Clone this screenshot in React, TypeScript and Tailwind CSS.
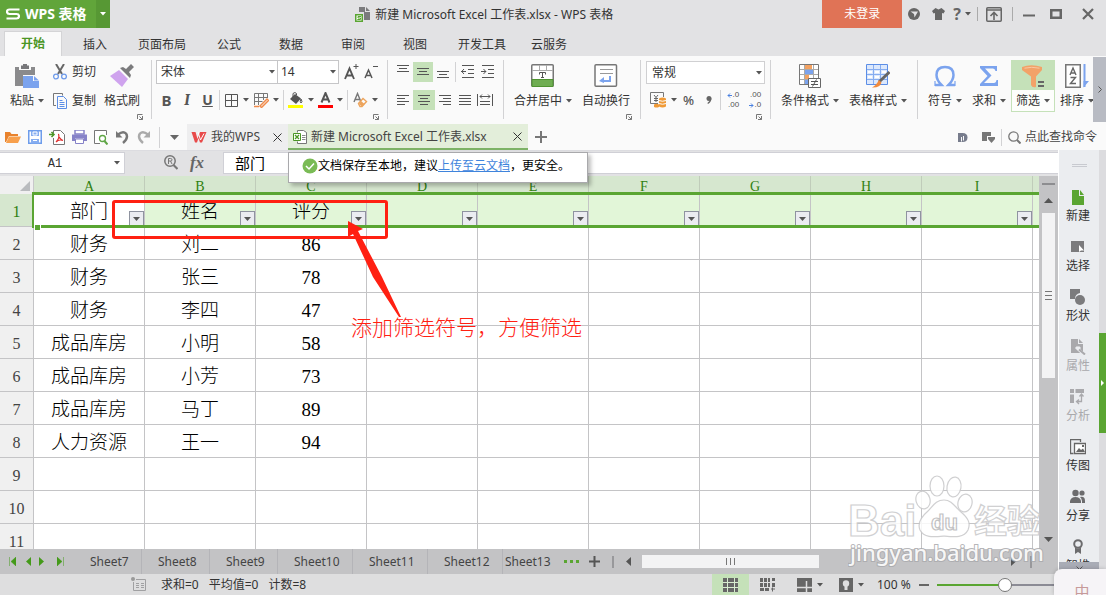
import React from "react";

type Kids = { children?: React.ReactNode };

function Icon({ w, h, children, className = "" }: { w: number; h: number; className?: string } & Kids) {
  return (
    <svg width={w} height={h} viewBox={`0 0 ${w} ${h}`} fill="none" className={`shrink-0 ${className}`} aria-hidden="true">
      {children}
    </svg>
  );
}

function Caret({ className = "text-[#555]" }: { className?: string }) {
  return (
    <Icon w={6} h={4} className={className}>
      <path d="M0 0h6L3 3.5z" fill="currentColor" />
    </Icon>
  );
}

function Sep({ className = "h-[59px]" }: { className?: string }) {
  return <div className={`w-px shrink-0 bg-[#d2d2d4] ${className}`} />;
}

function Launcher() {
  return (
    <button aria-label="更多设置" className="absolute right-2 bottom-1">
      <Icon w={6} h={6}>
        <path d="M.5 5V.5H5.5M5.5 2v3.500h-3.500M2.500 2.500l3 3" stroke="#777" />
      </Icon>
    </button>
  );
}

function BigButton({ label, caret = true, className, children }: { label: string; caret?: boolean; className: string } & Kids) {
  return (
    <button className={`flex h-[52px] shrink-0 flex-col items-center pt-1 ${className}`}>
      <span className="flex h-6 items-center">{children}</span>
      <span className="flex h-6 items-center gap-1 pt-px whitespace-nowrap">
        {label}
        {caret && <Caret />}
      </span>
    </button>
  );
}

function Lines({ rows }: { rows: [number, number, number][] }) {
  return (
    <Icon w={14} h={14}>
      {rows.map(([x1, x2, y]) => (
        <path key={y} d={`M${x1} ${y + 0.5}H${x2}`} stroke="#555" />
      ))}
    </Icon>
  );
}

const menuTabs: [string, string][] = [
  ["插入", "w-[62px]"],
  ["页面布局", "w-[72px]"],
  ["公式", "w-[62px]"],
  ["数据", "w-[62px]"],
  ["审阅", "w-[62px]"],
  ["视图", "w-[62px]"],
  ["开发工具", "w-[72px]"],
  ["云服务", "w-[62px]"],
];

function TitleBar() {
  return (
    <header className="flex h-7 items-center bg-[#e2e2e4]">
      <button className="flex h-7 w-24 shrink-0 items-center gap-[5px] bg-[#61a53a] pl-[6px] text-[14px] font-bold text-white">
        <Icon w={14} h={12}>
          <path d="M13.500 1.500H3.500Q1 1.500 1 3.700T3.500 6h7Q13 6 13 8.200T10.500 10.500H.5" stroke="#fff" strokeWidth="2.200" />
        </Icon>
        WPS 表格
      </button>
      <button aria-label="应用菜单" className="flex h-7 w-[14px] shrink-0 items-center justify-center bg-[#579834]">
        <Caret className="text-white" />
      </button>
      <div className="flex min-w-0 flex-1 items-center justify-center gap-[5px] pt-px pl-9 whitespace-nowrap text-[#333]">
        <Icon w={15} h={15}>
          <path d="M4 0h6v5h5v8H9V5H4z" fill="#7b7b7d" />
          <path d="M11 0l4 4h-4z" fill="#7b7b7d" />
          <rect x=".75" y="7.750" width="6.500" height="6.500" fill="#fff" stroke="#5aa532" strokeWidth="1.500" />
          <path d="M6 9.500H3v1.500h2.500v1.500H2.300" stroke="#5aa532" />
        </Icon>
        <h1>新建 Microsoft Excel 工作表.xlsx - WPS 表格</h1>
      </div>
      <button className="h-7 w-20 shrink-0 bg-[#e07356] text-white">未登录</button>
      <div className="flex shrink-0 items-center pr-3 pl-[6px] text-[#666]">
        <button aria-label="在线">
          <Icon w={12} h={12}>
            <circle cx="6" cy="6" r="6" fill="#666" />
            <path d="M2.500 3.500h7.500l-3.500 6-.5-3.500z" fill="#e2e2e4" />
          </Icon>
        </button>
        <button aria-label="皮肤" className="ml-3">
          <Icon w={13} h={12}>
            <path d="M3.500 0l3 1.500L9.500 0 13 3l-1.500 2.500L10 5v7H3V5l-1.500.5L0 3z" fill="#666" />
          </Icon>
        </button>
        <button aria-label="帮助" className="ml-2 flex items-center gap-1 text-[16px] leading-7 font-bold">
          ?<Caret />
        </button>
        <Sep className="ml-[6px] h-[14px] !bg-[#aaa]" />
        <button aria-label="收起功能区" className="ml-2">
          <Icon w={16} h={15}>
            <rect x=".75" y=".75" width="14.500" height="13.500" rx="1" stroke="#666" strokeWidth="1.500" />
            <path d="M1 3h14" stroke="#666" strokeWidth="1.500" />
            <path d="M8 13V6M4.500 9L8 5.500 11.500 9" stroke="#666" strokeWidth="1.600" />
          </Icon>
        </button>
        <Sep className="ml-[10px] h-[14px] !bg-[#aaa]" />
        <button aria-label="最小化" className="ml-[10px]">
          <Icon w={12} h={12}><path d="M0 7.500h12" stroke="#666" strokeWidth="2" /></Icon>
        </button>
        <button aria-label="最大化" className="ml-[15px]">
          <Icon w={12} h={10}><rect x="1.250" y="1.250" width="9.500" height="7.500" stroke="#666" strokeWidth="2.500" /></Icon>
        </button>
        <button aria-label="关闭" className="ml-5">
          <Icon w={12} h={12}><path d="M1 1l10 10M11 1L1 11" stroke="#666" strokeWidth="2.200" /></Icon>
        </button>
      </div>
    </header>
  );
}

function MenuTabs() {
  return (
    <nav className="flex h-7 items-end bg-[#e2e2e4] pl-1 text-[#333]">
      <button className="mr-[2px] h-[25px] w-[58px] border border-b-0 border-[#d4d4d6] bg-[#fafafa] font-bold text-[#4b9625]">开始</button>
      {menuTabs.map(([t, w]) => (
        <button key={t} className={`h-[25px] pt-[2px] ${w}`}>{t}</button>
      ))}
    </nav>
  );
}

function ClipboardGroup() {
  return (
    <div className="relative flex h-[64px] w-[151px] shrink-0 pl-1">
      <BigButton label="粘贴" className="w-[46px]">
        <Icon w={24} h={24}>
          <path d="M0 3h4v3h12V3h4v8H8v11H0z" fill="#8a8a8c" />
          <path d="M6 1.500h2V0h4v1.500h2V5H6z" fill="#77777a" />
          <path d="M8 12h10v5h6v7H8z" fill="#7ba3ee" />
          <path d="M19 12l5 4.500h-5z" fill="#7ba3ee" />
        </Icon>
      </BigButton>
      <div className="flex flex-col pl-[3px]">
        <button className="flex h-6 items-center gap-[5px]">
          <Icon w={14} h={16}>
            <path d="M3 0l6 10M11 0L5 10" stroke="#666" strokeWidth="2" />
            <circle cx="3" cy="12.500" r="2.400" stroke="#6f9bea" strokeWidth="1.300" />
            <circle cx="11" cy="12.500" r="2.400" stroke="#6f9bea" strokeWidth="1.300" />
          </Icon>
          剪切
        </button>
        <button className="mt-1 flex h-6 items-center gap-[5px] pt-px">
          <Icon w={14} h={16}>
            <path d="M9.500 2.500V.5H.5v12H3" stroke="#777" />
            <path d="M4.500 3.500h6l3 3v9h-9z" stroke="#5c8ee6" />
            <path d="M6.500 7.500h3M6.500 9.500h5M6.500 11.500h5M6.500 13.500h5" stroke="#5c8ee6" />
          </Icon>
          复制
        </button>
      </div>
      <BigButton label="格式刷" caret={false} className="ml-[5px] w-[42px]">
        <Icon w={24} h={24}>
          <path d="M9 6l9 9-6 8L0 12z" fill="#cfa3ee" />
          <path d="M10 4l3-1 3 2 5-5 3 3-5 5 2 3-1 3z" fill="#7b7b7d" />
        </Icon>
      </BigButton>
      <Launcher />
    </div>
  );
}

function FontGroup() {
  return (
    <div className="relative flex h-[64px] w-[235px] shrink-0 flex-col pl-1">
      <div className="flex items-center">
        <label className="relative flex h-6 w-[122px] items-center border border-[#c6c6c8] bg-white">
          <select aria-label="字体" className="h-full w-full appearance-none pl-1 outline-none"><option>宋体</option></select>
          <span className="pointer-events-none absolute right-[2px]"><Caret /></span>
        </label>
        <label className="relative flex h-6 w-[61px] items-center border border-l-0 border-[#c6c6c8] bg-white">
          <select aria-label="字号" className="h-full w-full appearance-none pl-[3px] text-[12px] outline-none"><option>14</option></select>
          <span className="pointer-events-none absolute right-[2px]"><Caret /></span>
        </label>
        <button aria-label="增大字号" className="ml-[5px]">
          <Icon w={15} h={16}>
            <path d="M1 15L5.500 4.500 10 15M2.800 11.500h5.500" stroke="#555" strokeWidth="1.900" />
            <path d="M12 0v5M9.500 2.500h5" stroke="#555" />
          </Icon>
        </button>
        <button aria-label="减小字号" className="ml-[5px]">
          <Icon w={15} h={16}>
            <path d="M1 14L4.500 6 8 14M2.500 11.500h4.200" stroke="#555" strokeWidth="1.500" />
            <path d="M9 2.500h5" stroke="#555" />
          </Icon>
        </button>
      </div>
      <div className="mt-1 flex h-6 items-center text-[#555]">
        <button aria-label="加粗" className="ml-1 w-[13px] text-[15px] leading-6 font-bold">B</button>
        <button aria-label="倾斜" className="ml-2 w-3 font-serif text-[16px] leading-6 font-bold italic">I</button>
        <button aria-label="下划线" className="ml-2 w-[13px] text-[14px] leading-6 font-bold underline">U</button>
        <Sep className="ml-[5px] h-5" />
        <button aria-label="边框" className="ml-[5px] flex items-center gap-[5px]">
          <Icon w={13} h={13}><path d="M.5.5h12v12H.5zM6.500 0v13M0 6.500h13" stroke="#555" /></Icon>
          <Caret />
        </button>
        <button aria-label="绘图边框" className="ml-[5px] flex items-center gap-1">
          <Icon w={15} h={15}>
            <path d="M.5 12V.5h13V5M.5 4.500h13M.5 8.500h8M4.500 0v12M9.500 0v7" stroke="#777" />
            <path d="M6 13l7-7 1.500 1.500-7 7zM0 13.500h5" stroke="#f08a4a" strokeWidth="1.500" />
          </Icon>
          <Caret />
        </button>
        <Sep className="ml-1 h-5" />
        <button aria-label="填充颜色" className="ml-1 flex items-center gap-[5px]">
          <Icon w={15} h={16}>
            <path d="M2 7l5-5 6 4.500-5 5.500z" fill="#555" />
            <path d="M5 5V1.500Q7-.5 8.500 1.500V3M13 7q2 3 0 4-1.500-1 0-4" stroke="#555" />
            <path d="M0 13h15v3H0z" fill="#ff0" />
          </Icon>
          <Caret />
        </button>
        <button aria-label="字体颜色" className="ml-1 flex items-center gap-1">
          <Icon w={15} h={16}>
            <path d="M3.500 10.500L7.500 1 11.500 10.500M5 7.500h5" stroke="#555" strokeWidth="2" />
            <path d="M0 13h15v3H0z" fill="#f00" />
          </Icon>
          <Caret />
        </button>
        <Sep className="ml-1 h-5" />
        <button aria-label="清除格式" className="ml-[5px] flex items-center gap-1">
          <Icon w={15} h={16}>
            <path d="M1 10L4.500 1.500 8 10M2.300 7.500h4.500" stroke="#777" strokeWidth="1.400" />
            <path d="M5.500 11.500L10 6.500l3.500 3-4.500 5H7z" fill="#fafafa" stroke="#eda45c" strokeWidth="1.400" />
            <path d="M8 9l3.500 3-2.500 2.500-3-2.500z" fill="#eda45c" />
          </Icon>
          <Caret />
        </button>
      </div>
      <Launcher />
    </div>
  );
}

function AlignGroup() {
  return (
    <div className="flex h-[64px] w-[115px] shrink-0 flex-col pt-[2px] pl-[5px]">
      <div className="flex h-5 items-center">
        <button aria-label="顶端对齐" className="flex size-5 items-center justify-center"><Lines rows={[[1, 13, 0], [3, 11, 3], [1, 13, 6]]} /></button>
        <button aria-label="垂直居中" className="flex size-5 items-center justify-center bg-[#c5e1b9]"><Lines rows={[[1, 13, 3], [3, 11, 6], [1, 13, 9]]} /></button>
        <button aria-label="底端对齐" className="flex size-5 items-center justify-center"><Lines rows={[[1, 13, 6], [3, 11, 9], [1, 13, 12]]} /></button>
        <Sep className="ml-[2px] h-5" />
        {["减少缩进", "增加缩进"].map((l, i) => (
          <button key={l} aria-label={l} className="ml-[5px] flex h-5 w-[15px] items-center">
            <Icon w={14} h={14}>
              <path d="M1 .5h12M7 4.500h6M7 8.500h6M1 12.500h12" stroke="#555" />
              <path d={i === 0 ? "M0 6.500h5M3 4L.7 6.500 3 9" : "M0 6.500h5M2.500 4l2.300 2.500L2.500 9"} stroke="#555" />
            </Icon>
          </button>
        ))}
      </div>
      <div className="mt-2 flex h-5 items-center">
        <button aria-label="左对齐" className="flex size-5 items-center justify-center"><Lines rows={[[1, 13, 2], [1, 9, 5], [1, 13, 8], [1, 9, 11]]} /></button>
        <button aria-label="水平居中" className="flex h-5 w-[22px] items-center justify-center bg-[#c5e1b9]"><Lines rows={[[1, 13, 2], [3, 11, 5], [1, 13, 8], [3, 11, 11]]} /></button>
        <button aria-label="右对齐" className="flex size-5 items-center justify-center"><Lines rows={[[1, 13, 2], [5, 13, 5], [1, 13, 8], [5, 13, 11]]} /></button>
        <button aria-label="两端对齐" className="flex size-5 items-center justify-center"><Lines rows={[[1, 13, 2], [1, 13, 5], [1, 13, 8], [1, 13, 11]]} /></button>
        <button aria-label="分散对齐" className="flex size-5 items-center justify-center">
          <Icon w={16} h={14}>
            <path d="M.5 1v12M15.500 1v12M3 3.500h10M5 1.500l-2 2 2 2M11 1.500l2 2-2 2M3 8.500h10M3 11.500h10" stroke="#555" />
          </Icon>
        </button>
      </div>
    </div>
  );
}

function MergeGroup() {
  return (
    <div className="relative flex h-[64px] w-[136px] shrink-0 pl-2">
      <BigButton label="合并居中" className="w-[62px]">
        <Icon w={24} h={24}>
          <rect x=".75" y=".75" width="21.500" height="21.500" rx="1" fill="#fff" stroke="#777" strokeWidth="1.500" />
          <path d="M1 6.500h21M8.500 1v5M15.500 1v5" stroke="#aaa" />
          <path d="M1 16h21v6H1z" fill="#6fad52" />
          <path d="M1 15.500h21v7H1z" stroke="#4f9331" />
          <path d="M8.500 10.500V8.500h6v2M11.500 8.500v5M10 13.500h3" stroke="#555" />
        </Icon>
      </BigButton>
      <BigButton label="自动换行" caret={false} className="ml-1 w-[56px]">
        <Icon w={24} h={24}>
          <rect x="1" y=".75" width="21.500" height="21.500" rx="1" fill="#fff" stroke="#777" strokeWidth="1.500" />
          <path d="M6 5.500h13M6 9.500h13" stroke="#999" />
          <path d="M16 12v5H9" stroke="#7ba3ee" strokeWidth="2" />
          <path d="M5 17l5-4v6z" fill="#7ba3ee" />
        </Icon>
      </BigButton>
      <Launcher />
    </div>
  );
}

function NumberGroup() {
  return (
    <div className="relative flex h-[64px] w-[129px] shrink-0 flex-col pt-px pl-[5px]">
      <label className="relative flex h-[23px] w-[119px] items-center border border-[#d0d0d2] bg-white">
        <select aria-label="数字格式" className="h-full w-full appearance-none pl-[5px] outline-none"><option>常规</option></select>
        <span className="pointer-events-none absolute right-[2px]"><Caret /></span>
      </label>
      <div className="mt-1 flex h-6 items-center text-[#555]">
        <button aria-label="货币" className="ml-1 flex items-center gap-1">
          <Icon w={17} h={16}>
            <path d="M8 11.500H.5V.5h13V5" stroke="#777" />
            <path d="M4 3l2 2.500L8 3M6 5.500V10M4 6.500h4M4 8.500h4" stroke="#666" />
            <path d="M9 6.500q3.500-2 7 0v8q-3.500 2-7 0z" fill="#f09a36" />
            <path d="M4 12.500q2.500-1.500 5 0v2.500q-2.500 1-5 0z" fill="#f09a36" />
            <path d="M9 8.500q3.500 1.500 7 0M9 11.500q3.500 1.500 7 0" stroke="#fafafa" />
          </Icon>
          <Caret />
        </button>
        <button aria-label="百分比" className="ml-[6px] text-[13px] leading-6 font-medium">%</button>
        <button aria-label="千位分隔" className="ml-3">
          <Icon w={6} h={9}><circle cx="3" cy="2.500" r="2.500" fill="#666" /><path d="M4.700 2.500q0 3.500-3 5" stroke="#666" strokeWidth="1.300" /></Icon>
        </button>
        <Sep className="ml-2 h-5" />
        <button aria-label="增加小数位" className="ml-[5px] flex w-[13px] flex-col items-end font-['Liberation_Sans',sans-serif] text-[8px] leading-[10px]">
          <span className="flex items-center"><Icon w={5} h={5}><path d="M5 2.500H1M3 .5l-2 2 2 2" stroke="#4a80e0" /></Icon>.0</span>
          <span>.00</span>
        </button>
        <button aria-label="减少小数位" className="ml-[9px] flex w-[13px] flex-col items-end font-['Liberation_Sans',sans-serif] text-[8px] leading-[10px]">
          <span>.00</span>
          <span className="flex items-center"><Icon w={5} h={5}><path d="M0 2.500h4M2 .5l2 2-2 2" stroke="#4a80e0" /></Icon>.0</span>
        </button>
      </div>
      <Launcher />
    </div>
  );
}

function StyleGroup() {
  return (
    <div className="flex h-[64px] w-[146px] shrink-0 pl-2">
      <BigButton label="条件格式" className="w-[62px]">
        <Icon w={24} h={24}>
          <path d="M1.500.500h19v20h-19z" fill="#fff" stroke="#777" />
          <path d="M2 5.500h18M2 10.500h18M2 15.500h18M6.500 1v19M15.500 1v19" stroke="#aaa" />
          <path d="M7 1h7v4H7zM7 11h4v4H7z" fill="#f4a261" />
          <path d="M7 6h8v4H7zM7 16h3v4H7z" fill="#7ba3ee" />
          <path d="M10.500 14.500h12v9h-12z" fill="#fff" stroke="#666" />
          <path d="M13 17.500h7M13 20.500h7M18.500 15.500l-4 7" stroke="#555" />
        </Icon>
      </BigButton>
      <BigButton label="表格样式" className="ml-[6px] w-[62px]">
        <Icon w={24} h={24}>
          <path d="M.5.500h21v20H.5z" fill="#dce8fc" stroke="#5c8ee6" />
          <path d="M1 5.500h20M1 10.500h20M1 15.500h20M7.500 1v19M14.500 1v19" stroke="#86adf0" />
          <path d="M2 8h4M9 8h4M16 8h4M2 13h4M9 13h4" stroke="#fff" strokeWidth="2" />
          <path d="M23.500 8L13 18" stroke="#666" strokeWidth="3" />
          <path d="M13 16l2.500 2.500Q14 24 6 23.500q4-2 7-7.500z" fill="#f08a3c" />
        </Icon>
      </BigButton>
    </div>
  );
}

function EditGroup() {
  return (
    <div className="flex h-[64px] min-w-0 flex-1 overflow-hidden pl-[5px]">
      <BigButton label="符号" className="w-[44px]">
        <Icon w={22} h={22}>
          <path d="M1 20h6.500Q2.500 15 2.500 10 2.500 2 11 2t8.500 8q0 5-5 10H21" stroke="#7ba3ee" strokeWidth="2.500" />
          <path d="M1 16v5M21 16v5" stroke="#7ba3ee" strokeWidth="1.200" />
        </Icon>
      </BigButton>
      <BigButton label="求和" className="w-[44px]">
        <Icon w={20} h={22}>
          <path d="M1 1h17v5h-1.500q-.5-2.500-2.500-2.500H6l6.500 7L5 18h10q2 0 2.500-3H19v6H1v-2l7.500-8L1 3z" fill="#7ba3ee" />
        </Icon>
      </BigButton>
      <BigButton label="筛选" className="w-[44px] border border-[#c5e1b9] bg-linear-to-b from-[#c5e1b9] from-58% to-[#fdfefc] to-58%">
        <Icon w={24} h={24}>
          <path d="M1 2q9-3.500 20 0v3l-6 6.500V22q-4 1-5-2v-8.500L1 5z" fill="#f2a268" />
          <path d="M3.500 3.200q7-1.800 15 0" stroke="#f9c8a2" />
          <path d="M17 17h6M17 21h6" stroke="#666" strokeWidth="1.800" />
        </Icon>
      </BigButton>
      <BigButton label="排序" className="w-[44px]">
        <Icon w={24} h={24}>
          <rect x=".75" y=".75" width="14.500" height="22.500" fill="#fff" stroke="#777" strokeWidth="1.500" />
          <path d="M5 11l3-7 3 7M6 9h4M5.500 13.500h5l-5 6h5.500" stroke="#666" strokeWidth="1.400" />
          <path d="M19.500 0v23" stroke="#7ba3ee" strokeWidth="2" />
          <path d="M18.500 23.500V17h5.500z" fill="#7ba3ee" />
        </Icon>
      </BigButton>
    </div>
  );
}

function Ribbon() {
  return (
    <section className="flex h-[68px] bg-[#fafafa] pt-1 text-[#333]">
      <ClipboardGroup />
      <Sep />
      <FontGroup />
      <Sep />
      <AlignGroup />
      <Sep />
      <MergeGroup />
      <Sep />
      <NumberGroup />
      <Sep />
      <StyleGroup />
      <Sep />
      <EditGroup />
      <button aria-label="更多" className="-mt-[3px] flex h-[65px] w-[13px] shrink-0 items-center justify-center bg-[#b8bbc3]">
        <Icon w={4} h={7}><path d="M.5.500l3 3-3 3" stroke="#555" /></Icon>
      </button>
    </section>
  );
}

function QuickBar() {
  return (
    <section className="flex h-[26px] items-center bg-[#fafafa] text-[#444]">
      <div className="flex w-[159px] shrink-0 items-center gap-[7px] pl-[5px]">
        <button aria-label="打开"><Icon w={16} h={14}><path d="M0 2h5l1.500 2H13v2H4L1 12H0z" fill="#e8822c" /><path d="M4 6.500h12L13 13H1z" fill="#f8a04c" /></Icon></button>
        <button aria-label="保存"><Icon w={14} h={14}><path d="M.75.750h12.500v12.500H.75z" fill="#fff" stroke="#6d9ceb" strokeWidth="1.500" /><path d="M3 1h8v5H3zM3 9h8v4.500H3z" fill="#86adf0" /><path d="M5 2h4v3H5zM5 10.500h4" stroke="#fff" /></Icon></button>
        <button aria-label="输出为PDF"><Icon w={16} h={15}><path d="M4.500 3V.5h7l4 4v10h-11V8" fill="#fff" stroke="#777" /><path d="M0 4.500h4M2.500 2L5 4.500 2.500 7" stroke="#4b9625" strokeWidth="1.500" /><path d="M7 12q4-4 2.500-8Q10 9 14 10.500 10 9 7 12z" stroke="#e03030" strokeWidth="1.200" /></Icon></button>
        <button aria-label="打印"><Icon w={15} h={14}><path d="M3 0h9v4H3z" stroke="#8682c8" strokeWidth="1.500" fill="#fff" /><path d="M0 4.500h15V11h-3V8.500H3V11H0z" fill="#8682c8" /><path d="M3.500 9h8v4.500h-8z" stroke="#8682c8" fill="#fff" /></Icon></button>
        <button aria-label="打印预览"><Icon w={14} h={15}><path d="M12.500 5V.5H.5v13H6" stroke="#777" fill="#fff" /><circle cx="8.500" cy="8.500" r="3" stroke="#5fa545" strokeWidth="1.300" fill="#fff" /><path d="M10.500 11l3 3.500" stroke="#5fa545" strokeWidth="2" /></Icon></button>
        <button aria-label="撤销"><Icon w={15} h={14}><path d="M3 4.500Q8 .5 11 3.500 14 8 8 13" stroke="#777" strokeWidth="2.400" /><path d="M1 1v6.500h6.500z" fill="#777" /></Icon></button>
        <button aria-label="恢复"><Icon w={14} h={14}><path d="M11 4.500Q6 .5 3 3.500 0 8 6 13" stroke="#aaa" strokeWidth="2.400" /><path d="M13 1v6.500H6.500z" fill="#aaa" /></Icon></button>
      </div>
      <Sep className="h-[21px]" />
      <button aria-label="自定义快速访问" className="flex w-[27px] shrink-0 justify-center pl-[2px]"><Icon w={9} h={5}><path d="M0 0h9L4.500 5z" fill="#666" /></Icon></button>
      <div className="flex h-[26px] w-[101px] shrink-0 items-center bg-[#eeeeef] pl-1">
        <Icon w={16} h={12}><path d="M.5 1h4l2 7 2.500-7h6.500L11 11.500H9L7.500 7 6 11.500H4z" fill="#e84a4a" /><path d="M7 1l2.500 8L13 2.500" stroke="#fff" /></Icon>
        <a href="#wps" className="ml-1">我的WPS</a>
        <button aria-label="关闭我的WPS" className="ml-auto pr-[6px]"><Icon w={9} h={9}><path d="M.5.500l8 8M8.500.500l-8 8" stroke="#333" /></Icon></button>
      </div>
      <div className="flex h-[26px] w-60 shrink-0 items-center border-b-2 border-[#7db266] bg-[#e3eeda] pt-px pl-[5px]">
        <Icon w={14} h={14}><path d="M4.500 2.500V.5h6l3 2v11h-9v-2" stroke="#777" fill="#fff" /><path d="M9 5.500h3.500M9 7.500h3.500M9 9.500h3.500" stroke="#888" /><path d="M.5 3.500h7v7h-7z" fill="#fff" stroke="#4b9625" /><path d="M2 5l4 4M6 5L2 9" stroke="#4b9625" strokeWidth="1.300" /></Icon>
        <a href="#doc" className="ml-1 whitespace-nowrap">新建 Microsoft Excel 工作表.xlsx</a>
        <button aria-label="关闭工作表" className="ml-auto pr-[6px]"><Icon w={9} h={9}><path d="M.5.500l8 8M8.500.500l-8 8" stroke="#333" /></Icon></button>
      </div>
      <button aria-label="新建标签" className="ml-[7px]"><Icon w={12} h={12}><path d="M6 0v12M0 6h12" stroke="#777" strokeWidth="2" /></Icon></button>
      <div className="ml-auto flex items-center pr-[9px]">
        <button aria-label="文档助手"><Icon w={10} h={11}><path d="M0 1h4.500q5 0 5 4.500t-5 4.500H0z" fill="#777c8c" /><path d="M3.500 9.500V5M5.500 8.500V4" stroke="#fafafa" /></Icon></button>
        <button aria-label="窗口" className="ml-[14px]"><Icon w={13} h={11}><path d="M0 0h9v4H5v5H0z" fill="#777" /><path d="M6 5h7v2L9.500 11 6 7z" fill="#777" /></Icon></button>
        <Sep className="ml-[6px] h-[17px]" />
        <button className="ml-[6px] flex items-center gap-1">
          <Icon w={13} h={13}><circle cx="5.500" cy="5.500" r="4.700" stroke="#777" strokeWidth="1.300" /><path d="M9 9l3.500 3.500" stroke="#777" strokeWidth="2" /></Icon>
          点此查找命令
        </button>
      </div>
    </section>
  );
}

function FormulaBar() {
  return (
    <section className="flex h-[26px] shrink-0 items-center border-t border-[#dcdce0] bg-[#e2e2e4] pb-[2px]">
      <div className="relative flex h-[22px] w-[125px] shrink-0 items-center border border-l-0 border-[#d0d0d6] bg-white">
        <input aria-label="名称框" defaultValue="A1" className="h-full w-full pt-[2px] pr-[14px] text-center font-['Liberation_Mono',monospace] text-[12px] text-[#333] outline-none" />
        <button aria-label="名称列表" className="absolute right-1"><Caret /></button>
      </div>
      <button aria-label="查找" className="ml-[39px]">
        <Icon w={14} h={15}><circle cx="6" cy="6" r="5.200" stroke="#777" strokeWidth="1.500" /><path d="M4.500 9V3.500h2q1.500 0 1.500 1.300T6.500 6h-2M6.500 6L8 9" stroke="#777" /><path d="M9.500 10l4 4" stroke="#777" strokeWidth="2.200" /></Icon>
      </button>
      <button aria-label="插入函数" className="ml-[11px] w-4 font-['Liberation_Serif',serif] text-[17px] leading-5 font-bold text-[#666] italic">fx</button>
      <input aria-label="编辑栏" defaultValue="部门" className="ml-[18px] h-[22px] min-w-0 flex-1 border border-r-0 border-[#d0d0d6] bg-white pl-[11px] text-[15px] outline-none" />
    </section>
  );
}

const columns = ["A", "B", "C", "D", "E", "F", "G", "H", "I"];
const rows: string[][] = [
  ["部门", "姓名", "评分"],
  ["财务", "刘二", "86"],
  ["财务", "张三", "78"],
  ["财务", "李四", "47"],
  ["成品库房", "小明", "58"],
  ["成品库房", "小芳", "73"],
  ["成品库房", "马丁", "89"],
  ["人力资源", "王一", "94"],
  [],
  [],
  [],
];

function Grid() {
  return (
    <div className="relative min-w-0 flex-1 overflow-hidden bg-white">
      <table className="w-full table-fixed border-separate border-spacing-0 font-['Liberation_Serif','Noto_Sans_CJK_SC',serif]">
        <colgroup>
          <col className="w-[34px]" />
          {columns.map((c) => <col key={c} className="w-[111px]" />)}
          <col />
        </colgroup>
        <thead>
          <tr className="h-[18px]">
            <th className="border-r border-[#c8c8ca] bg-[#f0f0f0] p-0">
              <Icon w={30} h={14} className="mx-auto"><path d="M28 3v10H18z" fill="#b9bbbe" /></Icon>
            </th>
            {columns.map((c) => (
              <th key={c} scope="col" className="border-r border-[#c0ccba] bg-[#d6e7cf] p-0 pt-1 text-[14px] leading-[14px] font-normal text-[#2f8010]">{c}</th>
            ))}
            <th className="bg-[#d6e7cf] p-0" />
          </tr>
        </thead>
        <tbody>
          {rows.map((r, i) => (
            <tr key={i} className="h-[33px]">
              <th scope="row" className={`border-r border-b border-[#c4c4c6] p-0 pt-[3px] text-[16px] leading-5 font-normal ${i === 0 ? "bg-[#d6e7cf] text-[#2f8010]" : "bg-[#f0f0f0] text-[#444]"}`}>{i + 1}</th>
              {columns.map((c, j) => (
                <td key={c} className={`relative border-r border-b border-[#c4c4c6] p-0 pt-1 text-center text-[19px] leading-7 font-light ${i === 0 && j > 0 ? "bg-[#e2f6d8]" : ""}`}>
                  {r[j]}
                  {i === 0 && (
                    <button aria-label={`筛选 ${c}`} className="absolute right-0 bottom-0 flex size-[15px] items-center justify-center border border-[#8f93a0] bg-[#ebecf1]">
                      <Icon w={7} h={4}><path d="M0 0h7L3.500 4z" fill="#555" /></Icon>
                    </button>
                  )}
                </td>
              ))}
              <td className={`border-b border-[#c4c4c6] ${i === 0 ? "bg-[#e2f6d8]" : ""}`} />
            </tr>
          ))}
        </tbody>
      </table>
      <div className="pointer-events-none absolute top-4 right-0 left-8 h-9 border-y-3 border-l-2 border-[#5aa532]" />
      <div className="pointer-events-none absolute top-12 left-[34px] size-[7px] border border-white bg-[#5aa532]" />
    </div>
  );
}

function VScroll() {
  return (
    <div className="flex w-[19px] shrink-0 flex-col items-center bg-[#c3c3c5]">
      <div className="mt-[7px] h-[2px] w-[13px] bg-[#8d8d90]" />
      <Icon w={9} h={5} className="mt-[13px]"><path d="M0 5h9L4.500 0z" fill="#555" /></Icon>
      <div className="mt-[10px] flex h-[165px] w-[13px] flex-col items-center justify-center gap-[3px] bg-[#f3f3f4]">
        <i className="h-px w-[7px] bg-[#777]" /><i className="h-px w-[7px] bg-[#777]" /><i className="h-px w-[7px] bg-[#777]" />
      </div>
      <Icon w={9} h={5} className="mt-auto mb-[7px]"><path d="M0 0h9L4.500 5z" fill="#555" /></Icon>
    </div>
  );
}

const sheets: [string, string][] = [
  ["Sheet7", "w-[68px]"],
  ["Sheet8", "w-[68px]"],
  ["Sheet9", "w-[68px]"],
  ["Sheet10", "w-[75px]"],
  ["Sheet11", "w-[75px]"],
  ["Sheet12", "w-[75px]"],
];

function SheetTabs() {
  return (
    <section className="flex h-[25px] shrink-0 items-center bg-[#c3c3c5] text-[#444]">
      <div className="flex w-[74px] shrink-0 items-center pl-[9px] text-[#449a1a]">
        <button aria-label="第一个"><Icon w={7} h={9}><path d="M.5 0v9M7 0v9L2 4.500z" fill="currentColor" stroke="currentColor" strokeWidth=".5" /></Icon></button>
        <button aria-label="上一个" className="ml-[10px]"><Icon w={5} h={9}><path d="M5 0v9L0 4.500z" fill="currentColor" /></Icon></button>
        <button aria-label="下一个" className="ml-2"><Icon w={5} h={9}><path d="M0 0v9l5-4.500z" fill="currentColor" /></Icon></button>
        <button aria-label="最后一个" className="ml-[13px]"><Icon w={7} h={9}><path d="M6.500 0v9M0 0v9l5-4.500z" fill="currentColor" stroke="currentColor" strokeWidth=".5" /></Icon></button>
      </div>
      {sheets.map(([s, w]) => (
        <button key={s} className={`h-[25px] shrink-0 border-r border-[#b4b4b8] pt-px pl-4 text-left ${w}`}>{s}</button>
      ))}
      <button className="w-[60px] shrink-0 pt-px pl-[2px] text-left">Sheet13</button>
      <button aria-label="更多工作表"><Icon w={16} h={3}><path d="M1 0h3v3H1zM7 0h3v3H7zM13 0h3v3h-3z" fill="#5aa532" /></Icon></button>
      <button aria-label="新建工作表" className="ml-[10px]"><Icon w={11} h={11}><path d="M5.500 0v11M0 5.500h11" stroke="#555" strokeWidth="2" /></Icon></button>
      <div className="ml-3 h-3 w-[2px] bg-[#98989b]" />
      <button aria-label="向左滚动" className="ml-3"><Icon w={5} h={9}><path d="M5 0v9L0 4.500z" fill="#555" /></Icon></button>
      <div className="ml-[11px] flex h-[13px] w-[177px] items-center justify-center gap-[3px] bg-[#f3f3f4]">
        <i className="h-[7px] w-px bg-[#777]" /><i className="h-[7px] w-px bg-[#777]" /><i className="h-[7px] w-px bg-[#777]" />
      </div>
      <button aria-label="向右滚动" className="ml-auto"><Icon w={5} h={9}><path d="M0 0v9l5-4.500z" fill="#555" /></Icon></button>
      <div className="mr-[26px] ml-[14px] h-3 w-[2px] bg-[#98989b]" />
    </section>
  );
}

const sideIcons: [string, boolean, React.ReactNode][] = [
  ["新建", false, <><path d="M2 1h7v6h5v9H2z" fill="#5aa532" /><path d="M10 1l4 5h-4z" fill="#5aa532" /></>],
  ["选择", false, <><path d="M1 2h13v11H1z" fill="#7b7b7d" /><path d="M9 6v7l2-1.500h3z" fill="#fff" /></>],
  ["形状", false, <><path d="M0 0h10v4q-5 1-5 6H0z" fill="#7b7b7d" /><circle cx="10" cy="11" r="5" fill="#7b7b7d" /></>],
  ["属性", true, <><path d="M1 0h7v5h5v9H1z" fill="currentColor" /><path d="M9 0l4 4H9z" fill="currentColor" /><path d="M6 8l2 2 2-2M8 10l6 5.500" stroke="#ebedf0" strokeWidth="3" /><path d="M9 10.500l6 5" stroke="currentColor" strokeWidth="2" /></>],
  ["分析", true, <><path d="M0 0h4v4H0zM5.500 0H14v4H5.500zM0 5.500h4V14H0z" fill="currentColor" /><path d="M7 12.500h4.500V6M9.500 7.500l2-2.500 2 2.500M9 10.500l-2.500 2L9 15" stroke="currentColor" strokeWidth="1.300" /></>],
  ["传图", false, <><path d="M3.500 14.500h-3V.5h10V3" stroke="#666" strokeWidth="1.300" /><path d="M4.500 4.500h11v10h-11z" fill="#fff" stroke="#666" strokeWidth="1.300" /><path d="M6 13l3-4 2 2 2-1.500 2 3.500z" fill="#666" /><path d="M12 6h2v2h-2z" fill="#666" /></>],
  ["分享", false, <><circle cx="5.500" cy="4" r="3.200" fill="#6c6c6e" /><circle cx="12" cy="4" r="2.600" fill="#6c6c6e" /><path d="M0 14V12q1-4 5.500-4T11 12v2zM12 14v-2q-.5-3-2-4 5-1 5 4v2z" fill="#6c6c6e" /></>],
  ["智推", false, <><circle cx="8" cy="5" r="3.800" stroke="#6c6c6e" strokeWidth="2" /><path d="M5 8.500V15l3-2 3 2V8.500q-3 2-6 0z" fill="#6c6c6e" /></>],
];

function Sidebar() {
  return (
    <aside className="flex shrink-0">
      <div className="flex w-[41px] flex-col overflow-hidden border-l border-white bg-[#ebedf0] text-[#333]">
        <div className="flex h-[34px] shrink-0 flex-col items-center gap-px pt-[14px]">
          <i className="h-px w-[15px] bg-[#c8cad0]" /><i className="h-px w-[15px] bg-[#c8cad0]" />
        </div>
        <div className="min-h-0 flex-1 overflow-hidden">
          {sideIcons.map(([l, off, art]) => (
            <button key={l} className={`flex h-[50px] w-full flex-col items-center pt-[5px] pr-[2px] ${off ? "text-[#a9a9ac]" : ""}`}>
              <Icon w={16} h={16}>{art}</Icon>
              <span className="leading-[22px]">{l}</span>
            </button>
          ))}
        </div>
        <button aria-label="向下" className="flex h-3 w-full shrink-0 justify-center bg-[#a9acb6] pt-1"><Icon w={7} h={4}><path d="M.5.500l3 3 3-3" stroke="#555" /></Icon></button>
      </div>
      <div className="w-[7px] bg-[#dcdcdf] pt-[183px]">
        <button aria-label="展开侧栏" className="flex h-[100px] w-full items-center justify-center bg-[#5aa532]"><Icon w={3} h={6}><path d="M0 0v6l3-3z" fill="#fff" /></Icon></button>
      </div>
    </aside>
  );
}

function StatusBar() {
  return (
    <footer className="flex h-[21px] shrink-0 items-center bg-[#dededf] text-[#333]">
      <Icon w={15} h={15} className="ml-[131px]">
        <circle cx="2" cy="2" r="2" fill="#999" />
        <path d="M5 2.500h9.500v11h-12V5M5 6.500h3M10 6.500h3M5 8.500h3M10 8.500h3M5 10.500h3M10 10.500h3" stroke="#a0a0a2" />
      </Icon>
      <div className="ml-[15px] flex gap-[10px] pt-px whitespace-nowrap">
        <span>求和=0</span><span>平均值=0</span><span>计数=8</span>
      </div>
      <div className="ml-auto flex h-full shrink-0 items-center">
        <button aria-label="普通视图" className="flex h-full w-[37px] items-center justify-center bg-[#c5e1b9]">
          <Icon w={15} h={14}><path d="M0 0h15v14H0z" fill="#666" /><path d="M0 4.500h15M0 9.500h15M4.500 0v14M11.500 0v14" stroke="#d8ecd0" /></Icon>
        </button>
        <button aria-label="分页预览" className="ml-[11px]"><Icon w={16} h={14}><path d="M0 0h10v9H0z" fill="#666" /><path d="M0 4.500h10M3.500 0v9M7.500 0v9" stroke="#dededf" /><path d="M12 0h3v3h-3zM12 5h3v4h-3zM0 10h4v3H0zM5 10h4v3H5z" fill="#666" /><path d="M11 11h4M12.500 9.500v4" stroke="#666" /></Icon></button>
        <button aria-label="页面布局视图" className="ml-[21px] flex items-center gap-[5px]"><Icon w={15} h={14}><path d="M0 0h15v14H0z" fill="#666" /><path d="M0 9.500h15M9.500 3v11" stroke="#dededf" strokeWidth="1.500" /></Icon><Caret /></button>
        <button aria-label="护眼模式" className="ml-4 flex items-center gap-[5px]"><Icon w={14} h={14}><path d="M0 0h14v14H0z" fill="#666" /><circle cx="7" cy="5.500" r="3.200" fill="#dededf" /><path d="M5.500 8h3v4h-3z" fill="#dededf" /></Icon><Caret /></button>
        <label htmlFor="zoom" className="ml-[13px] w-[37px] whitespace-nowrap">100 %</label>
        <button aria-label="缩小" className="ml-[5px]"><Icon w={10} h={2}><path d="M0 1h10" stroke="#666" strokeWidth="2" /></Icon></button>
        <input
          id="zoom"
          type="range"
          defaultValue={50}
          className="mr-[34px] ml-2 h-[14px] w-[135px] appearance-none bg-[linear-gradient(to_right,#5aa532_50%,#8b8b95_50%)] bg-[length:100%_2px] bg-center bg-no-repeat [&::-webkit-slider-thumb]:size-[14px] [&::-webkit-slider-thumb]:appearance-none [&::-webkit-slider-thumb]:rounded-full [&::-webkit-slider-thumb]:border [&::-webkit-slider-thumb]:border-[#777] [&::-webkit-slider-thumb]:bg-white"
        />
      </div>
    </footer>
  );
}

function SavedNotice() {
  return (
    <div role="status" className="absolute top-[152px] left-[288px] flex h-[31px] w-[300px] items-center border border-[#a9a9ac] bg-white pb-1 pl-[13px] whitespace-nowrap text-black shadow-[3px_3px_4px_rgba(0,0,0,0.25)]">
      <Icon w={16} h={16}><circle cx="8" cy="8" r="7.500" fill="#7abb55" /><path d="M4 8l3 3 5-5.500" stroke="#fff" strokeWidth="1.500" /></Icon>
      文档保存至本地，建议<a href="#cloud" className="text-[#3f84dc] underline">上传至云文档</a>，更安全。
    </div>
  );
}

function Annotation() {
  return (
    <>
      <div className="pointer-events-none absolute top-[200px] left-[112px] h-[39px] w-[276px] rounded-[3px] border-3 border-[#ff2012]" />
      <svg className="pointer-events-none absolute top-[218px] left-[346px]" width="60" height="102" viewBox="0 0 60 102" aria-hidden="true">
        <path d="M2 3L17 11 12 13 36 59 55 99 53 99 27 59 7 16 2 19z" fill="#ff2012" />
      </svg>
      <p className="pointer-events-none absolute top-[313px] left-[351px] text-[21px] leading-7 font-light whitespace-nowrap text-[#ff2012]">添加筛选符号，方便筛选</p>
    </>
  );
}

function Watermark() {
  return (
    <div className="pointer-events-none absolute right-[58px] bottom-5 opacity-85" aria-hidden="true">
      <svg width="200" height="100" viewBox="0 0 200 100" fill="#fff" stroke="#c8c8ca" strokeWidth="1.200">
        <ellipse cx="75" cy="25" rx="7" ry="9" transform="rotate(-15 75 25)" />
        <ellipse cx="89" cy="11" rx="7" ry="10" />
        <ellipse cx="106" cy="12" rx="7" ry="10" transform="rotate(10 106 12)" />
        <ellipse cx="117" cy="28" rx="7" ry="9" transform="rotate(15 117 28)" />
        <path d="M96 25c8 0 11 7 17 12 7 6 10 11 7 18-4 8-13 7-24 6-11 1-20 2-24-6-3-7 1-13 8-19 5-5 8-11 16-11z" />
        <text x="0" y="61" fontFamily="Liberation Sans, sans-serif" fontWeight="700" fontSize="44">Bai</text>
        <text x="83" y="55" fontFamily="Liberation Sans, sans-serif" fontWeight="700" fontSize="22" stroke="#b8b8ba">du</text>
        <text x="126" y="58" fontFamily="Noto Sans CJK SC, sans-serif" fontWeight="700" fontSize="33">经验</text>
        <text x="2" y="86" fontFamily="Noto Sans, sans-serif" fontWeight="500" fontSize="22" stroke="#aaaaad" strokeWidth="2" paintOrder="stroke">jingyan.baidu.com</text>
      </svg>
    </div>
  );
}

export default function App() {
  return (
    <div className="relative flex h-screen w-full flex-col overflow-hidden bg-[#e2e2e4] font-['Noto_Sans','Noto_Sans_CJK_SC',sans-serif] text-[12px] leading-4">
      <TitleBar />
      <MenuTabs />
      <Ribbon />
      <QuickBar />
      <div className="flex min-h-0 flex-1">
        <main className="flex min-w-0 flex-1 flex-col">
          <FormulaBar />
          <div className="flex min-h-0 flex-1">
            <Grid />
            <VScroll />
          </div>
          <SheetTabs />
        </main>
        <Sidebar />
      </div>
      <StatusBar />
      <SavedNotice />
      <Annotation />
      <Watermark />
      <div className="absolute right-0 bottom-0 flex h-[26px] w-[52px] items-start justify-center rounded-tl-lg bg-[#f6f4f7] pt-[14px] pl-1 text-[15px] leading-4 text-[#c79a9a] shadow-[0_0_4px_rgba(0,0,0,0.2)]">中</div>
    </div>
  );
}
